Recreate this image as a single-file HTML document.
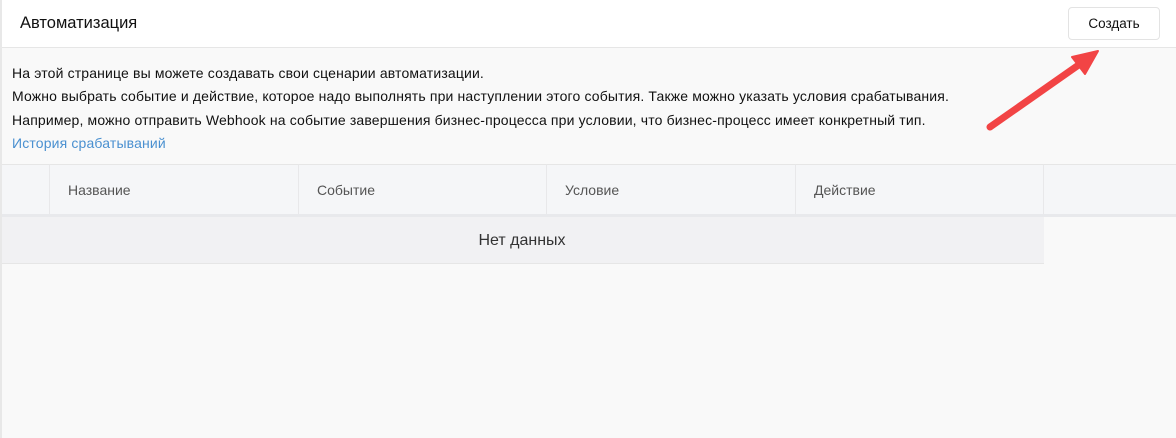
<!DOCTYPE html>
<html><head><meta charset="utf-8"><style>
*{margin:0;padding:0;box-sizing:border-box}
body{width:1176px;height:438px;background:#f9f9f9;font-family:"Liberation Sans",sans-serif;position:relative;overflow:hidden}
.lb{position:absolute;left:0;top:0;width:2px;height:438px;background:#e8e8e8;z-index:5}
.hdr{position:absolute;left:0;top:0;width:1176px;height:48px;background:#fff;border-bottom:1px solid #e6e6e6}
.hdr h1{position:absolute;left:20px;top:14px;font-size:16.5px;font-weight:normal;color:#111}
.btn{position:absolute;left:1068px;top:7px;width:92px;height:33px;border:1px solid #e3e3e3;border-radius:4px;background:#fff;font-size:13.5px;text-align:center;line-height:31px;color:#111}
.desc{position:absolute;left:12px;top:62px;font-size:14px;letter-spacing:0.15px;color:#111;line-height:23.3px}
.desc a{color:#4a90d0}
.th{position:absolute;top:164px;height:50px;background:#f5f6f8;border-top:1px solid #e6e6e6;border-right:1px solid #e8e8ea;font-size:14px;color:#555;line-height:50px;padding-left:18px}
.line{position:absolute;left:0;top:214px;width:1176px;height:3px;background:#e8e9ec}
.empty{position:absolute;left:0;top:217px;width:1044px;height:47px;background:#f1f1f3;border-bottom:1px solid #e6e6e6;text-align:center;line-height:47px;font-size:16px;color:#333}
</style></head><body>
<div class="hdr"><h1>Автоматизация</h1><div class="btn">Создать</div></div>
<div class="desc">На этой странице вы можете создавать свои сценарии автоматизации.<br>Можно выбрать событие и действие, которое надо выполнять при наступлении этого события. Также можно указать условия срабатывания.<br>Например, можно отправить Webhook на событие завершения бизнес-процесса при условии, что бизнес-процесс имеет конкретный тип.<br><a>История срабатываний</a></div>
<div class="th" style="left:0;width:50px"></div>
<div class="th" style="left:50px;width:249px">Название</div>
<div class="th" style="left:299px;width:248px">Событие</div>
<div class="th" style="left:547px;width:249px">Условие</div>
<div class="th" style="left:796px;width:248px">Действие</div>
<div class="th" style="left:1044px;width:132px;border-right:none"></div>
<div class="line"></div>
<div class="empty">Нет данных</div>
<div class="lb"></div>
<svg style="position:absolute;left:0;top:0" width="1176" height="438">
<line x1="990" y1="127" x2="1080" y2="64" stroke="#f24445" stroke-width="7" stroke-linecap="round"/>
<polygon points="1098,51 1072,57 1085,74" fill="#f24445" stroke="#f24445" stroke-width="2" stroke-linejoin="round"/>
</svg>
</body></html>
